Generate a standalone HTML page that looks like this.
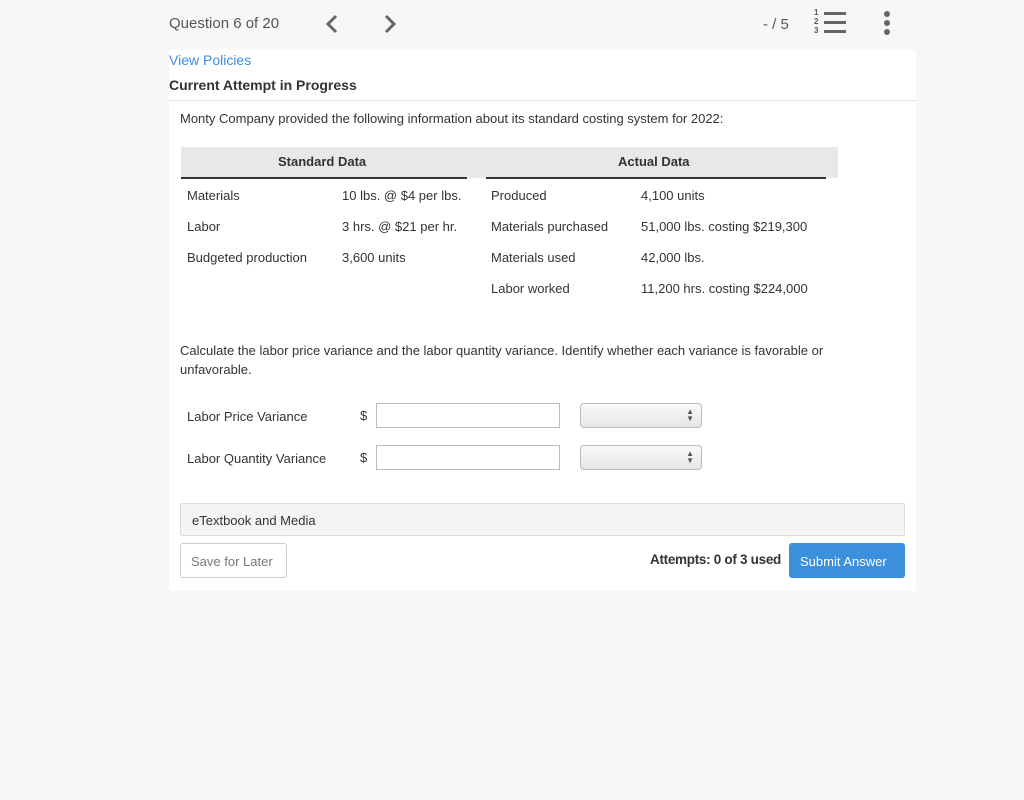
<!DOCTYPE html>
<html><head><style>
body{margin:0;width:1024px;height:800px;background:#f7f7f7;font-family:"Liberation Sans",sans-serif;position:relative;overflow:hidden;color:#333}
.a{position:absolute;white-space:nowrap}
.t{font-size:13px;color:#333}
</style></head><body>
<div class="a" style="left:169px;top:15px;font-size:15px;color:#555">Question 6 of 20</div>
<svg class="a" style="left:322px;top:12px" width="20" height="24"><path d="M14 4 L6 12 L14 20" stroke="#666" stroke-width="3" fill="none"/></svg>
<svg class="a" style="left:380px;top:12px" width="20" height="24"><path d="M6 4 L14 12 L6 20" stroke="#666" stroke-width="3" fill="none"/></svg>
<div class="a" style="left:763px;top:16px;font-size:15px;color:#555">- / 5</div>
<div class="a" style="left:814px;top:8px;font-size:8px;line-height:9px;color:#555;font-weight:bold">1<br>2<br>3</div>
<div class="a" style="left:824px;top:12px;width:22px;height:3px;background:#666"></div>
<div class="a" style="left:824px;top:21px;width:22px;height:3px;background:#666"></div>
<div class="a" style="left:824px;top:30px;width:22px;height:3px;background:#666"></div>
<div class="a" style="left:884px;top:11px;width:6px;height:6px;border-radius:3px;background:#666"></div>
<div class="a" style="left:884px;top:20px;width:6px;height:6px;border-radius:3px;background:#666"></div>
<div class="a" style="left:884px;top:29px;width:6px;height:6px;border-radius:3px;background:#666"></div>

<div class="a" style="left:169px;top:50px;width:747px;height:541px;background:#fff"></div>
<div class="a" style="left:169px;top:52px;font-size:14px;color:#3d8fd8">View Policies</div>
<div class="a" style="left:169px;top:77px;font-size:14px;font-weight:bold;color:#333">Current Attempt in Progress</div>
<div class="a" style="left:169px;top:100px;width:747px;height:1px;background:#e3e3e3"></div>
<div class="a t" style="left:180px;top:111px">Monty Company provided the following information about its standard costing system for 2022:</div>

<div class="a" style="left:181px;top:147px;width:657px;height:31px;background:#e8e8e8"></div>
<div class="a t" style="left:278px;top:154px;font-weight:bold">Standard Data</div>
<div class="a t" style="left:618px;top:154px;font-weight:bold">Actual Data</div>
<div class="a" style="left:181px;top:177px;width:286px;height:1.5px;background:#333"></div>
<div class="a" style="left:486px;top:177px;width:340px;height:1.5px;background:#333"></div>

<div class="a t" style="left:187px;top:188px">Materials</div>
<div class="a t" style="left:342px;top:188px">10 lbs. @ $4 per lbs.</div>
<div class="a t" style="left:491px;top:188px">Produced</div>
<div class="a t" style="left:641px;top:188px">4,100 units</div>
<div class="a t" style="left:187px;top:219px">Labor</div>
<div class="a t" style="left:342px;top:219px">3 hrs. @ $21 per hr.</div>
<div class="a t" style="left:491px;top:219px">Materials purchased</div>
<div class="a t" style="left:641px;top:219px">51,000 lbs. costing $219,300</div>
<div class="a t" style="left:187px;top:250px">Budgeted production</div>
<div class="a t" style="left:342px;top:250px">3,600 units</div>
<div class="a t" style="left:491px;top:250px">Materials used</div>
<div class="a t" style="left:641px;top:250px">42,000 lbs.</div>
<div class="a t" style="left:491px;top:281px">Labor worked</div>
<div class="a t" style="left:641px;top:281px">11,200 hrs. costing $224,000</div>

<div class="a t" style="left:180px;top:341px;line-height:19px;white-space:normal;width:700px">Calculate the labor price variance and the labor quantity variance. Identify whether each variance is favorable or unfavorable.</div>

<div class="a t" style="left:187px;top:409px">Labor Price Variance</div>
<div class="a t" style="left:360px;top:408px">$</div>
<div class="a" style="left:376px;top:403px;width:182px;height:23px;border:1px solid #bbb;background:#fff"></div>
<div class="a" style="left:580px;top:403px;width:120px;height:23px;border:1px solid #bbb;border-radius:4px;background:linear-gradient(#fafafa,#e6e6e6)"><span class="a" style="right:7px;top:4px;font-size:8px;line-height:7px;color:#555">▲<br>▼</span></div>
<div class="a t" style="left:187px;top:451px">Labor Quantity Variance</div>
<div class="a t" style="left:360px;top:450px">$</div>
<div class="a" style="left:376px;top:445px;width:182px;height:23px;border:1px solid #bbb;background:#fff"></div>
<div class="a" style="left:580px;top:445px;width:120px;height:23px;border:1px solid #bbb;border-radius:4px;background:linear-gradient(#fafafa,#e6e6e6)"><span class="a" style="right:7px;top:4px;font-size:8px;line-height:7px;color:#555">▲<br>▼</span></div>

<div class="a" style="left:180px;top:503px;width:723px;height:31px;border:1px solid #ddd;border-radius:2px;background:#f4f4f4"></div>
<div class="a t" style="left:192px;top:513px">eTextbook and Media</div>
<div class="a" style="left:180px;top:543px;width:105px;height:33px;border:1px solid #ccc;border-radius:3px;background:#fff"></div>
<div class="a t" style="left:191px;top:554px;color:#777">Save for Later</div>
<div class="a t" style="left:650px;top:552px;font-weight:bold;font-size:13.5px;letter-spacing:-0.3px">Attempts: 0 of 3 used</div>
<div class="a" style="left:789px;top:543px;width:116px;height:35px;border-radius:3px;background:#3b8fdc"></div>
<div class="a t" style="left:800px;top:554px;color:#fff">Submit Answer</div>
</body></html>
